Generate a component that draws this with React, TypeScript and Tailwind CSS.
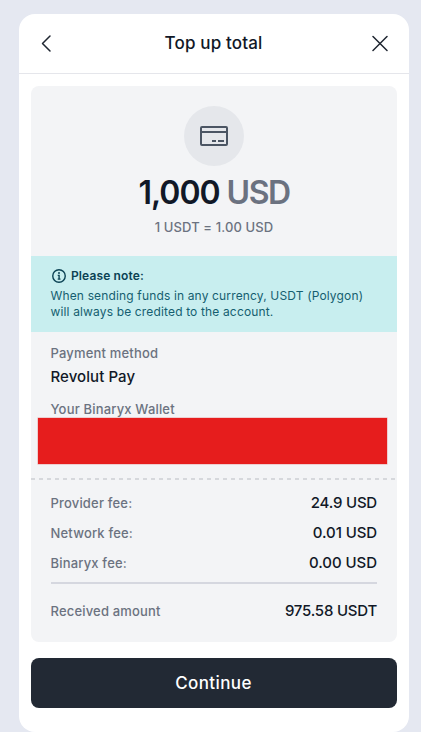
const fees = [
  { label: "Provider fee:", value: "24.9 USD", spacing: "tracking-[-0.2px]" },
  { label: "Network fee:", value: "0.01 USD", spacing: "tracking-[-0.1px]" },
  { label: "Binaryx fee:", value: "0.00 USD", spacing: "tracking-[-0.05px]" },
];

function Header() {
  return (
    <header className="flex h-[60px] items-center justify-between border-b border-[#e5e6eb] px-[17px]">
      <button aria-label="Back" className="flex h-5 w-5 items-center justify-center text-[#1f2631]">
        <svg width="20" height="20" viewBox="0 0 20 20" fill="none" stroke="currentColor" strokeWidth="1.5" strokeLinecap="round" strokeLinejoin="round">
          <path d="M14 2 6.5 9.5 14 17" />
        </svg>
      </button>
      <h1 className="-mt-[2px] -ml-[1px] text-[17px] leading-6 font-medium tracking-[0.15px] text-[#111827]">Top up total</h1>
      <button aria-label="Close" className="flex h-5 w-5 items-center justify-center text-[#1f2631]">
        <svg width="20" height="20" viewBox="0 0 20 20" fill="none" stroke="currentColor" strokeWidth="1.5" strokeLinecap="round">
          <path d="M1 2.5 15 16.5M15 2.5 1 16.5" />
        </svg>
      </button>
    </header>
  );
}

function Summary() {
  return (
    <section className="flex h-[170px] flex-col items-center pt-5">
      <div className="flex h-[60px] w-[60px] items-center justify-center rounded-full bg-[#e5e7eb] text-[#4b5563]">
        <svg width="28" height="20" viewBox="0 0 28 20" fill="none" stroke="currentColor" strokeWidth="2" strokeLinejoin="round">
          <rect x="1" y="1" width="26" height="18" rx="1" />
          <path d="M1 6h26M12 15h4M18 15h6" />
        </svg>
      </div>
      <p className="mt-[7px] flex gap-[7px] text-[32px] leading-10 font-semibold tracking-[-1.2px] text-[#111827]">
        <span className="tracking-[-1px]">1,000</span>
        <span className="tracking-[-1.5px] text-[#6b7280]">USD</span>
      </p>
      <p className="mt-1 text-[13px] leading-5 font-[450] tracking-[0.12px] text-[#6b7280]">1 USDT = 1.00 USD</p>
    </section>
  );
}

export default function App() {
  return (
    <main className="flex h-[732px] w-[421px] bg-[#e5e8f1] pt-[14px] pl-[19px] font-['Inter',sans-serif]">
      <div className="h-[718px] w-[390px] rounded-2xl bg-white">
        <Header />
        <div className="px-3 pt-3">
          <div className="h-[556px] overflow-hidden rounded-lg bg-[#f3f4f6]">
            <Summary />
            <section className="h-[76px] bg-[#c8eeef] px-5 pt-3 text-xs leading-4 text-[#155e70]">
              <div className="flex h-4 items-center gap-[5px] text-[#0b4254]">
                <svg className="ml-px" width="14" height="14" viewBox="0 0 15 15" fill="none" stroke="currentColor" strokeWidth="1.5">
                  <circle cx="7.5" cy="7.5" r="6.7" />
                  <path d="M6.1 6.8h1.5v4M6.1 10.8h3" />
                  <circle cx="7.5" cy="4.2" r=".35" fill="currentColor" />
                </svg>
                <strong className="font-semibold tracking-[0.12px]">Please note:</strong>
              </div>
              <p className="mt-1 -ml-[0.5px] tracking-[0.15px] whitespace-nowrap">
                When sending funds in any currency, USDT (Polygon)
                <br />
                will always be credited to the account.
              </p>
            </section>
            <section className="h-[146px] pt-[11px]">
              <div className="px-5">
                <p className="-ml-[0.5px] text-[13px] leading-5 font-[450] tracking-[0.18px] text-[#6b7280]">Payment method</p>
                <p className="mt-1 -ml-[0.5px] text-[15px] leading-5 font-medium tracking-[0.08px] text-[#111827]">Revolut Pay</p>
                <p className="mt-3 -ml-[0.5px] h-[19px] text-[13px] leading-5 font-[450] tracking-[0.18px] text-[#6b7280]">Your Binaryx Wallet</p>
              </div>
              <div className="mr-[10px] ml-[7px] h-[46px] bg-[#e61d1d] shadow-[0_0_0_0.5px_#e9a5a8]" />
            </section>
            <div className="h-[2px] bg-[repeating-linear-gradient(90deg,#d6d8dc_0px,#d6d8dc_4px,#f3f4f6_4px,#f3f4f6_8px)]" />
            <section className="px-5 pt-2">
              {fees.map((fee) => (
                <div key={fee.label} className="flex h-[30px] items-center justify-between">
                  <span className="-ml-[0.5px] pt-px text-[13px] font-[450] tracking-[0.18px] text-[#6b7280]">{fee.label}</span>
                  <span className={`text-[15px] font-medium text-[#111827] ${fee.spacing}`}>{fee.value}</span>
                </div>
              ))}
              <div className="mt-[4px] h-[2px] bg-[#d5d7df]" />
              <div className="mt-3 flex h-[30px] items-center justify-between">
                <span className="-ml-[0.5px] pt-px text-[13px] font-[450] tracking-[0.18px] text-[#6b7280]">Received amount</span>
                <span className="text-[15px] font-medium tracking-[-0.22px] text-[#111827]">975.58 USDT</span>
              </div>
            </section>
          </div>
          <button className="mt-4 flex h-[50px] w-full items-center justify-center rounded-lg bg-[#222934] text-[17px] font-medium tracking-[0.4px] text-white">
            <span className="mt-[2px] -ml-px">Continue</span>
          </button>
        </div>
      </div>
    </main>
  );
}
